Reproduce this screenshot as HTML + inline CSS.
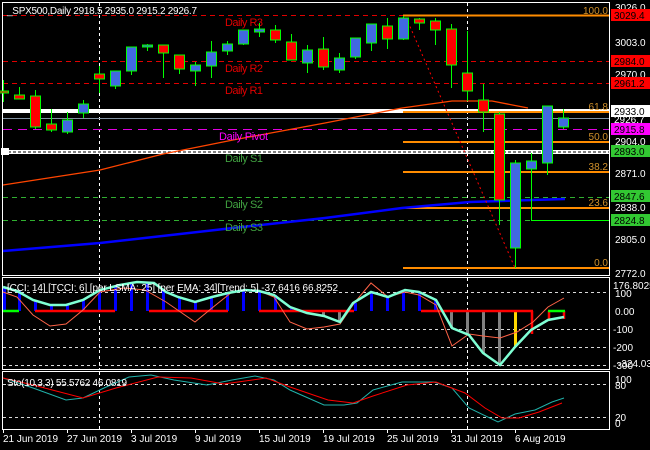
<!DOCTYPE html>
<html><head><meta charset="utf-8"><style>
html,body{margin:0;padding:0;background:#000;}
svg{display:block;font-family:"Liberation Sans",sans-serif;}
</style></head><body>
<svg width="650" height="450" viewBox="0 0 650 450" xmlns="http://www.w3.org/2000/svg">
<rect width="650" height="450" fill="#000"/>
<g fill="none" stroke="#fff" stroke-width="1">
<rect x="2.5" y="2.5" width="607" height="273"/>
<rect x="2.5" y="277.5" width="607" height="92"/>
<rect x="2.5" y="371.5" width="607" height="58"/>
</g>
<g stroke="#fff" stroke-dasharray="3,3">
<line x1="99.5" y1="3" x2="99.5" y2="275"/><line x1="467.5" y1="3" x2="467.5" y2="275"/>
<line x1="99.5" y1="278" x2="99.5" y2="369"/><line x1="467.5" y1="278" x2="467.5" y2="369"/>
<line x1="99.5" y1="372" x2="99.5" y2="429"/><line x1="467.5" y1="372" x2="467.5" y2="429"/>
</g>
<g stroke-dasharray="5,4" stroke-width="1">
<line x1="3" y1="15.5" x2="609" y2="15.5" stroke="#e00000"/>
<line x1="3" y1="61.5" x2="609" y2="61.5" stroke="#e00000"/>
<line x1="3" y1="83.5" x2="609" y2="83.5" stroke="#e00000"/>
<line x1="3" y1="129.5" x2="609" y2="129.5" stroke="#e000e0" stroke-dasharray="9,6"/>
<line x1="3" y1="197.5" x2="609" y2="197.5" stroke="#30b030"/>
<line x1="3" y1="220.5" x2="609" y2="220.5" stroke="#30b030"/>
</g>
<rect x="3" y="109" width="606" height="4" fill="#fff"/>
<line x1="3" y1="118.5" x2="609" y2="118.5" stroke="#8090a0"/>
<rect x="3" y="150" width="606" height="4" fill="#fff"/>
<line x1="3" y1="152" x2="609" y2="152" stroke="#000" stroke-dasharray="3,2"/>
<rect x="1" y="148" width="8" height="7" fill="#fff"/>
<g stroke="#ff8c00" stroke-width="2">
<line x1="403" y1="15.5" x2="609" y2="15.5"/>
<line x1="403" y1="112" x2="609" y2="112"/>
<line x1="403" y1="142" x2="609" y2="142"/>
<line x1="403" y1="172" x2="609" y2="172"/>
<line x1="403" y1="208" x2="609" y2="208"/>
<line x1="403" y1="268" x2="609" y2="268"/>
</g>
<g fill="#d0902a" font-size="10" text-anchor="end">
<text x="608" y="14">100.0</text><text x="608" y="110">61.8</text><text x="608" y="140">50.0</text>
<text x="608" y="170">38.2</text><text x="608" y="206">23.6</text><text x="608" y="266">0.0</text>
</g>
<polyline fill="none" stroke="#ff4500" stroke-width="1.3" points="3,185 100,170 163,154 233,140 325,123 402,108 452,101 492,101 528,108"/>
<polyline fill="none" stroke="#0000ff" stroke-width="2.5" points="3,251 100,243 233,228 325,218 402,208 470,202 565,199"/>
<line x1="408" y1="22" x2="515" y2="268" stroke="#ff0000" stroke-dasharray="2,3"/>
<g font-size="11">
<text x="225" y="26" fill="#e00000" textLength="38">Daily R3</text>
<text x="225" y="72" fill="#e00000" textLength="38">Daily R2</text>
<text x="225" y="94" fill="#e00000" textLength="38">Daily R1</text>
<text x="219" y="140" fill="#ff00ff" textLength="49">Daily Pivot</text>
<text x="225" y="162" fill="#40a040" textLength="38">Daily S1</text>
<text x="225" y="208" fill="#40a040" textLength="38">Daily S2</text>
<text x="225" y="231" fill="#40a040" textLength="38">Daily S3</text>
</g>
<g stroke="#00ff00" stroke-width="1">
<line x1="3.5" y1="80" x2="3.5" y2="102"/><rect x="-1.5" y="91" width="10" height="2" fill="#f00"/>
<line x1="19.5" y1="87" x2="19.5" y2="99"/><rect x="14.5" y="95" width="10" height="4" fill="#f00"/>
<line x1="35.5" y1="90" x2="35.5" y2="129"/><rect x="30.5" y="96" width="10" height="31" fill="#f00"/>
<line x1="51.5" y1="109" x2="51.5" y2="132"/><rect x="46.5" y="124" width="10" height="6" fill="#f00"/>
<line x1="67.5" y1="112" x2="67.5" y2="134"/><rect x="62.5" y="120" width="10" height="12" fill="#4169e1"/>
<line x1="83.5" y1="100" x2="83.5" y2="118"/><rect x="78.5" y="104" width="10" height="9" fill="#4169e1"/>
<line x1="99.5" y1="66" x2="99.5" y2="93"/><rect x="94.5" y="74" width="10" height="5" fill="#f00"/>
<line x1="115.5" y1="71" x2="115.5" y2="89"/><rect x="110.5" y="71" width="10" height="15" fill="#4169e1"/>
<line x1="131.5" y1="47" x2="131.5" y2="75"/><rect x="126.5" y="47" width="10" height="24" fill="#4169e1"/>
<line x1="147.5" y1="44" x2="147.5" y2="51"/><rect x="142.5" y="45" width="10" height="2" fill="#4169e1"/>
<line x1="163.5" y1="45" x2="163.5" y2="78"/><rect x="158.5" y="45" width="10" height="8" fill="#f00"/>
<line x1="179.5" y1="55" x2="179.5" y2="74"/><rect x="174.5" y="55" width="10" height="14" fill="#f00"/>
<line x1="195.5" y1="62" x2="195.5" y2="86"/><rect x="190.5" y="65" width="10" height="6" fill="#4169e1"/>
<line x1="211.5" y1="41" x2="211.5" y2="78"/><rect x="206.5" y="52" width="10" height="14" fill="#4169e1"/>
<line x1="227.5" y1="41" x2="227.5" y2="55"/><rect x="222.5" y="44" width="10" height="7" fill="#4169e1"/>
<line x1="243.5" y1="30" x2="243.5" y2="45"/><rect x="238.5" y="30" width="10" height="14" fill="#4169e1"/>
<line x1="259.5" y1="23" x2="259.5" y2="37"/><rect x="254.5" y="29" width="10" height="3" fill="#4169e1"/>
<line x1="275.5" y1="25" x2="275.5" y2="43"/><rect x="270.5" y="30" width="10" height="10" fill="#f00"/>
<line x1="291.5" y1="34" x2="291.5" y2="60"/><rect x="286.5" y="42" width="10" height="18" fill="#f00"/>
<line x1="307.5" y1="45" x2="307.5" y2="73"/><rect x="302.5" y="50" width="10" height="13" fill="#4169e1"/>
<line x1="323.5" y1="37" x2="323.5" y2="70"/><rect x="318.5" y="49" width="10" height="18" fill="#f00"/>
<line x1="339.5" y1="53" x2="339.5" y2="73"/><rect x="334.5" y="58" width="10" height="12" fill="#4169e1"/>
<line x1="355.5" y1="38" x2="355.5" y2="59"/><rect x="350.5" y="38" width="10" height="19" fill="#4169e1"/>
<line x1="371.5" y1="24" x2="371.5" y2="51"/><rect x="366.5" y="24" width="10" height="19" fill="#4169e1"/>
<line x1="387.5" y1="18" x2="387.5" y2="49"/><rect x="382.5" y="26" width="10" height="13" fill="#f00"/>
<line x1="403.5" y1="16" x2="403.5" y2="40"/><rect x="398.5" y="18" width="10" height="21" fill="#4169e1"/>
<line x1="419.5" y1="18" x2="419.5" y2="30"/><rect x="414.5" y="19" width="10" height="4" fill="#f00"/>
<line x1="435.5" y1="18" x2="435.5" y2="45"/><rect x="430.5" y="21" width="10" height="9" fill="#f00"/>
<line x1="451.5" y1="24" x2="451.5" y2="88"/><rect x="446.5" y="29" width="10" height="36" fill="#f00"/>
<line x1="467.5" y1="31" x2="467.5" y2="101"/><rect x="462.5" y="73" width="10" height="18" fill="#f00"/>
<line x1="483.5" y1="84" x2="483.5" y2="132"/><rect x="478.5" y="100" width="10" height="12" fill="#f00"/>
<line x1="499.5" y1="112" x2="499.5" y2="225"/><rect x="494.5" y="114" width="10" height="86" fill="#f00"/>
<line x1="515.5" y1="160" x2="515.5" y2="268"/><rect x="510.5" y="163" width="10" height="85" fill="#4169e1"/>
<line x1="531.5" y1="153" x2="531.5" y2="220"/><rect x="526.5" y="161" width="10" height="8" fill="#4169e1"/>
<line x1="547.5" y1="106" x2="547.5" y2="175"/><rect x="542.5" y="106" width="10" height="57" fill="#4169e1"/>
<line x1="563.5" y1="109" x2="563.5" y2="129"/><rect x="558.5" y="118" width="10" height="9" fill="#4169e1"/>
</g>
<line x1="531" y1="220.5" x2="609" y2="220.5" stroke="#00ff00"/>
<text x="7" y="14" fill="#fff" font-size="10" textLength="190">_SPX500,Daily  2918.5 2935.0 2915.2 2926.7</text>
<g font-size="10" fill="#fff">
<text x="615" y="11">3026.0</text>
<text x="615" y="46">3003.0</text>
<text x="615" y="78">2970.0</text>
<text x="615" y="145">2904.0</text>
<text x="615" y="177">2871.0</text>
<text x="615" y="211">2838.0</text>
<text x="615" y="243">2805.0</text>
<text x="615" y="277">2772.0</text>
</g>
<g font-size="10">
<rect x="611" y="9" width="39" height="12" fill="#f00"/><text x="614" y="19" fill="#000">3029.4</text>
<rect x="611" y="55" width="39" height="12" fill="#f00"/><text x="614" y="65" fill="#000">2984.0</text>
<rect x="611" y="77" width="39" height="12" fill="#f00"/><text x="614" y="87" fill="#000">2961.2</text>
<rect x="611" y="105" width="39" height="12" fill="#fff"/><text x="614" y="115" fill="#000">2933.0</text>
<text x="614" y="123" fill="#fff">2926.7</text>
<rect x="611" y="123" width="39" height="12" fill="#ff00ff"/><text x="614" y="133" fill="#000">2915.8</text>
<rect x="611" y="145" width="39" height="12" fill="#32c832"/><text x="614" y="155" fill="#000">2893.0</text>
<rect x="611" y="190" width="39" height="12" fill="#32c832"/><text x="614" y="200" fill="#000">2847.6</text>
<rect x="611" y="214" width="39" height="12" fill="#32c832"/><text x="614" y="224" fill="#000">2824.8</text>
</g>
<g stroke="#fff" stroke-dasharray="3,3" opacity="0.85">
<line x1="3" y1="292.5" x2="609" y2="292.5"/><line x1="3" y1="329.5" x2="609" y2="329.5"/>
<line x1="3" y1="347.5" x2="609" y2="347.5"/><line x1="3" y1="365.5" x2="609" y2="365.5"/>
</g>
<g fill="#0000ff">
<rect x="3" y="287" width="3" height="24"/><rect x="18" y="291" width="3" height="20"/>
<rect x="34" y="300" width="3" height="11"/><rect x="50" y="305" width="3" height="6"/>
<rect x="66" y="305" width="3" height="6"/><rect x="82" y="300" width="3" height="11"/>
<rect x="98" y="290" width="3" height="21"/><rect x="114" y="285" width="3" height="26"/>
<rect x="130" y="282" width="3" height="29"/><rect x="146" y="283" width="3" height="28"/>
<rect x="162" y="290" width="3" height="21"/><rect x="178" y="297" width="3" height="14"/>
<rect x="194" y="302" width="3" height="9"/><rect x="210" y="297" width="3" height="14"/>
<rect x="226" y="293" width="3" height="18"/><rect x="242" y="290" width="3" height="21"/>
<rect x="258" y="291" width="3" height="20"/><rect x="274" y="295" width="3" height="16"/>
<rect x="290" y="307" width="3" height="4"/>
<rect x="354" y="303" width="3" height="8"/><rect x="370" y="292" width="3" height="19"/>
<rect x="386" y="297" width="3" height="14"/><rect x="402" y="290" width="3" height="21"/>
<rect x="418" y="292" width="3" height="19"/><rect x="434" y="300" width="3" height="11"/>
</g>
<g fill="#808080">
<rect x="322" y="311" width="3" height="5"/><rect x="338" y="311" width="3" height="11"/>
<rect x="450" y="311" width="3" height="17"/><rect x="466" y="311" width="3" height="24"/>
<rect x="482" y="311" width="3" height="42"/><rect x="498" y="311" width="3" height="54"/>
</g>
<rect x="514" y="311" width="3" height="36" fill="#ffd700"/>
<g stroke="#ff0000" stroke-width="2.5">
<line x1="35" y1="311" x2="115" y2="311"/><line x1="149" y1="311" x2="228" y2="311"/>
<line x1="259" y1="311" x2="354" y2="311"/><line x1="421" y1="311" x2="533" y2="311"/>
<line x1="532" y1="311" x2="532" y2="334"/>
<line x1="549" y1="311" x2="549" y2="319"/><line x1="564" y1="311" x2="564" y2="319"/>
</g>
<g stroke="#00ff00" stroke-width="2.5">
<line x1="3" y1="311" x2="19" y2="311"/><line x1="548" y1="311" x2="565" y2="311"/>
</g>
<polyline fill="none" stroke="#ff6347" stroke-width="1" points="3,292 17,297 33,315 50,326 66,324 83,310 100,292 124,288 145,290 166,302 195,322 212,308 232,292 257,290 274,297 290,322 307,329 324,327 340,324 355,302 371,283 388,297 405,292 419,295 436,305 452,346 469,334 483,336 500,338 517,332 533,322 548,307 564,298"/>
<polyline fill="none" stroke="#7fffd4" stroke-width="2.5" points="3,287 17,291 33,300 50,305 66,305 83,300 100,290 120,285 137,282 154,283 166,292 178,297 195,302 212,297 228,293 245,290 259,291 274,295 290,307 307,313 324,316 340,322 353,303 371,292 388,297 405,290 419,292 436,300 452,328 469,335 483,353 500,365 515,347 531,330 548,320 564,317"/>
<text x="7" y="291" fill="#fff" font-size="10" textLength="331">[CCI: 14] [TCCI: 6] [per LSMA: 25] [per EMA: 34][Trend: 5]  -37.6416 66.8252</text>
<g font-size="10" fill="#fff">
<text x="613" y="289">176.8025</text><text x="615" y="297">100</text><text x="615" y="315">0.00</text>
<text x="613" y="333">-100</text><text x="613" y="351">-200</text><text x="613" y="369">-300</text>
<text x="618" y="367">-324.0300</text>
</g>
<g stroke="#fff" stroke-dasharray="3,3" opacity="0.85">
<line x1="3" y1="384.5" x2="609" y2="384.5"/><line x1="3" y1="417.5" x2="609" y2="417.5"/>
</g>
<polyline fill="none" stroke="#20b2aa" stroke-width="1" points="3,378 33,388 66,400 83,398 104,388 129,377 151,375 174,380 207,385 232,380 255,376 274,380 290,390 324,405 344,405 357,403 373,390 402,382 434,382 452,388 469,408 498,422 515,414 535,410 552,402 564,398"/>
<polyline fill="none" stroke="#ff0000" stroke-width="1" points="3,378 33,385 83,398 116,388 158,377 191,378 224,384 266,378 290,387 328,400 353,403 373,396 407,385 436,382 465,393 485,408 502,418 519,418 539,412 562,403"/>
<text x="7" y="386" fill="#fff" font-size="10" textLength="120">Sto(10,3,3) 55.5762 46.0819</text>
<g font-size="10" fill="#fff">
<text x="615" y="383">100</text><text x="615" y="389">80</text><text x="615" y="421">20</text><text x="615" y="427">0</text>
</g>
<g stroke="#fff"><line x1="3.5" y1="430" x2="3.5" y2="433"/><line x1="67.5" y1="430" x2="67.5" y2="433"/>
<line x1="131.5" y1="430" x2="131.5" y2="433"/><line x1="195.5" y1="430" x2="195.5" y2="433"/>
<line x1="259.5" y1="430" x2="259.5" y2="433"/><line x1="323.5" y1="430" x2="323.5" y2="433"/>
<line x1="387.5" y1="430" x2="387.5" y2="433"/><line x1="451.5" y1="430" x2="451.5" y2="433"/>
<line x1="515.5" y1="430" x2="515.5" y2="433"/></g>
<g font-size="10" fill="#fff">
<text x="3" y="442">21 Jun 2019</text><text x="67" y="442">27 Jun 2019</text><text x="131" y="442">3 Jul 2019</text>
<text x="195" y="442">9 Jul 2019</text><text x="259" y="442">15 Jul 2019</text><text x="323" y="442">19 Jul 2019</text>
<text x="387" y="442">25 Jul 2019</text><text x="451" y="442">31 Jul 2019</text><text x="515" y="442">6 Aug 2019</text>
</g>
</svg>
</body></html>
